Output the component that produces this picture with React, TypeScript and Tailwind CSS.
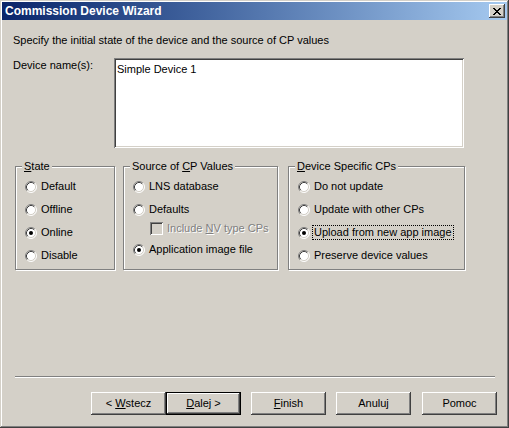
import React from "react";

const raised =
  "shadow-[inset_-1px_-1px_#404040,inset_1px_1px_#ffffff,inset_-2px_-2px_#808080,inset_2px_2px_#d4d0c8]";
const sunken =
  "shadow-[inset_1px_1px_#808080,inset_-1px_-1px_#ffffff,inset_2px_2px_#404040,inset_-2px_-2px_#d4d0c8]";

function Radio({ checked }: { checked?: boolean }) {
  return (
    <svg width="12" height="12" viewBox="0 0 12 12" className="shrink-0">
      <circle cx="6" cy="6" r="5" fill="#ffffff" />
      <path d="M2.11 9.89 A5.5 5.5 0 0 1 9.89 2.11" stroke="#808080" fill="none" />
      <path d="M2.82 9.18 A4.5 4.5 0 0 1 9.18 2.82" stroke="#404040" fill="none" />
      <path d="M9.89 2.11 A5.5 5.5 0 0 1 2.11 9.89" stroke="#ffffff" fill="none" />
      <path d="M9.18 2.82 A4.5 4.5 0 0 1 2.82 9.18" stroke="#d4d0c8" fill="none" />
      {checked && <circle cx="6" cy="6" r="2" fill="#000000" />}
    </svg>
  );
}

function RadioRow({
  label,
  checked,
  focus,
}: {
  label: React.ReactNode;
  checked?: boolean;
  focus?: boolean;
}) {
  return (
    <div className="flex items-center gap-[4px] h-[23px]">
      <Radio checked={checked} />
      <span
        className={
          focus
            ? "outline outline-1 outline-dotted outline-black leading-[13px] px-[1px] -ml-[1px]"
            : "leading-[13px]"
        }
      >
        {label}
      </span>
    </div>
  );
}

function Group({
  title,
  width,
  children,
}: {
  title: React.ReactNode;
  width: string;
  children: React.ReactNode;
}) {
  return (
    <div
      className={`relative h-[104px] ${width} border border-[#808080] shadow-[1px_1px_0_#ffffff,inset_1px_1px_0_#ffffff] pl-[9px] pt-[8px]`}
    >
      <span className="absolute -top-[7px] left-[6px] bg-[#d4d0c8] px-[2px] leading-[13px]">
        {title}
      </span>
      {children}
    </div>
  );
}

function Btn({
  children,
  def,
}: {
  children: React.ReactNode;
  def?: boolean;
}) {
  return (
    <button
      className={`w-[75px] h-[23px] bg-[#d4d0c8] text-black text-[11px] ${
        def ? "border border-black " : ""
      }${raised}`}
    >
      {children}
    </button>
  );
}

export default function App() {
  return (
    <div
      className="w-[509px] h-[428px] bg-[#d4d0c8] text-[11px] text-black p-[2px] overflow-hidden shadow-[inset_-1px_-1px_#404040,inset_1px_1px_#d4d0c8,inset_-2px_-2px_#808080,inset_2px_2px_#ffffff]"
      style={{ fontFamily: '"Liberation Sans", Arial, sans-serif' }}
    >
      {/* title bar */}
      <div className="h-[18px] flex items-center justify-between pl-[3px] pr-[2px] bg-gradient-to-r from-[#0a246a] to-[#a6caf0]">
        <span className="text-white font-bold text-[12px] leading-[18px]">
          Commission Device Wizard
        </span>
        <div
          className={`w-[16px] h-[14px] bg-[#d4d0c8] flex items-center justify-center ${raised}`}
        >
          <svg width="8" height="7" viewBox="0 0 8 7">
            <path
              d="M0 0h2v1h1v1h2V1h1V0h2v1H7v1H6v1H5v1h1v1h1v1h1v1H6V6H5V5H3v1H2v1H0V6h1V5h1V4h1V3H2V2H1V1H0z"
              fill="#000"
            />
          </svg>
        </div>
      </div>

      <div className="pl-[11px]">
        <div className="mt-[14px] leading-[13px]">
          Specify the initial state of the device and the source of CP values
        </div>

        <div className="mt-[11px] flex">
          <div className="w-[101px] pt-[1px] leading-[13px]">Device name(s):</div>
          <div className={`w-[350px] h-[90px] bg-white pl-[3px] pt-[3px] ${sunken}`}>
            <span className="leading-[13px]">Simple Device 1</span>
          </div>
        </div>

        <div className="mt-[18px] ml-[2px] flex gap-[8px]">
          <Group
            width="w-[100px]"
            title={
              <>
                <u>S</u>tate
              </>
            }
          >
            <RadioRow label="Default" />
            <RadioRow label="Offline" />
            <RadioRow label="Online" checked />
            <RadioRow label="Disable" />
          </Group>

          <Group
            width="w-[155px] mr-[2px]"
            title={
              <>
                Source of <u>C</u>P Values
              </>
            }
          >
            <RadioRow label="LNS database" />
            <RadioRow label="Defaults" />
            <div className="flex items-center gap-[4px] h-[20px] pl-[17px] -mt-[3px]">
              <div className={`w-[13px] h-[13px] bg-[#d4d0c8] shrink-0 ${sunken}`} />
              <span className="text-[#808080] [text-shadow:1px_1px_0_#ffffff] leading-[13px]">
                Include <u>N</u>V type CPs
              </span>
            </div>
            <RadioRow label="Application image file" checked />
          </Group>

          <Group
            width="w-[177px]"
            title={
              <>
                <u>D</u>evice Specific CPs
              </>
            }
          >
            <RadioRow label="Do not update" />
            <RadioRow label="Update with other CPs" />
            <RadioRow label="Upload from new app image" checked focus />
            <RadioRow label="Preserve device values" />
          </Group>
        </div>

        <div className="mt-[106px] ml-[2px] w-[480px] border-t border-[#808080] border-b border-b-white" />

        <div className="mt-[14px] flex pl-[78px]">
          <Btn>
            &lt; <u>W</u>stecz
          </Btn>
          <Btn def>
            <u>D</u>alej &gt;
          </Btn>
          <div className="w-[10px]" />
          <Btn>
            <u>F</u>inish
          </Btn>
          <div className="w-[10px]" />
          <Btn>Anuluj</Btn>
          <div className="w-[11px]" />
          <Btn>Pomoc</Btn>
        </div>
      </div>
    </div>
  );
}
